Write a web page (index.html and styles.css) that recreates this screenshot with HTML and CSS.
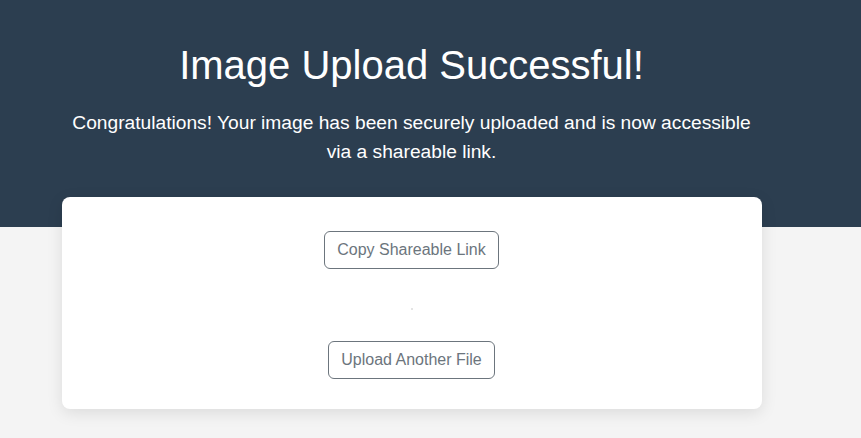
FILE: index.html
```html
<!DOCTYPE html>
<html lang="en">
<head>
<meta charset="utf-8">
<title>Image Upload Successful</title>
<link rel="stylesheet" href="styles.css">
</head>
<body>
<header class="hero">
  <div class="hero-inner">
    <h1 class="hero-title">Image Upload Successful!</h1>
    <p class="hero-text">Congratulations! Your image has been securely uploaded and is now accessible via a shareable link.</p>
  </div>
</header>
<main class="main">
  <section class="card">
    <button class="btn" type="button">Copy Shareable Link</button>
    <div class="preview"></div>
    <button class="btn" type="button">Upload Another File</button>
  </section>
</main>
</body>
</html>
```
FILE: styles.css
```css
html, body {
  margin: 0;
  padding: 0;
}
body {
  background: #f4f4f4;
  font-family: "Liberation Sans", Arial, sans-serif;
  color: #212529;
  height: 438px;
  overflow: hidden;
}
.hero {
  background: #2c3e50;
  color: #ffffff;
  padding: 41px 38px 60px 0;
}
.hero-inner {
  display: flex;
  flex-direction: column;
  align-items: center;
  text-align: center;
}
.hero-title {
  margin: 0 0 20px;
  font-size: 40px;
  font-weight: 400;
  line-height: 48px;
}
.hero-text {
  margin: 0;
  max-width: 700px;
  font-size: 19.2px;
  line-height: 28.8px;
}
.main {
  display: flex;
  justify-content: center;
  padding-right: 38px;
}
.card {
  width: 700px;
  margin-top: -30px;
  background: #ffffff;
  border-radius: 8px;
  box-shadow: 0 4px 16px rgba(0, 0, 0, 0.1);
  padding: 34px 0 30px;
  display: flex;
  flex-direction: column;
  align-items: center;
}
.btn {
  font-family: "Liberation Sans", Arial, sans-serif;
  font-size: 16px;
  line-height: 24px;
  padding: 6px 12px;
  color: #6c757d;
  background: transparent;
  border: 1px solid #6c757d;
  border-radius: 6px;
  cursor: pointer;
}
.preview {
  width: 2px;
  height: 2px;
  background: #e4e4e4;
  margin: 39px 0 31px;
}
```
